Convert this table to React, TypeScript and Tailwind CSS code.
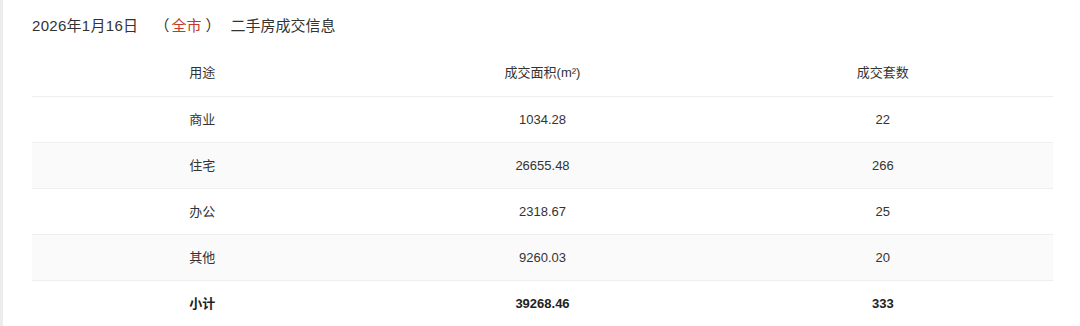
import React from 'react';

const rows = [
  { use: '商业', area: '1034.28', count: '22' },
  { use: '住宅', area: '26655.48', count: '266' },
  { use: '办公', area: '2318.67', count: '25' },
  { use: '其他', area: '9260.03', count: '20' },
];

export default function App() {
  return (
    <div
      className="flex h-[326px] w-[1080px] overflow-hidden bg-white text-[#333]"
      style={{ fontFamily: '"Liberation Sans", "Noto Sans CJK SC", sans-serif' }}
    >
      {/* left gutter */}
      <div className="w-[3px] shrink-0 bg-[#ececec]" />

      <div className="flex-1 pl-[29px] pt-4">
        {/* Heading */}
        <div className="flex h-5 items-center text-[15px] leading-5 text-[#333]">
          <span className="tracking-[0.3px]">2026年1月16日</span>
          <span className="ml-[16px]">（</span>
          <span className="ml-[2px] text-[#c0392b]">全市</span>
          <span className="ml-[4px]">）</span>
          <span className="ml-[10px]">二手房成交信息</span>
        </div>

        {/* Table */}
        <div className="mt-[14px] w-[1021px] text-[13px]">
          <div className="grid h-[47px] grid-cols-3 items-center border-b border-[#eeeeee] text-center">
            <div>用途</div>
            <div>成交面积(m²)</div>
            <div>成交套数</div>
          </div>

          {rows.map((r, i) => (
            <div
              key={r.use}
              className={`grid h-[46px] grid-cols-3 items-center border-b border-[#eeeeee] text-center ${
                i % 2 === 1 ? 'bg-[#fafafa]' : 'bg-white'
              }`}
            >
              <div>{r.use}</div>
              <div>{r.area}</div>
              <div>{r.count}</div>
            </div>
          ))}

          <div className="grid h-[46px] grid-cols-3 items-center text-center font-bold text-[#222]">
            <div>小计</div>
            <div>39268.46</div>
            <div>333</div>
          </div>
        </div>
      </div>
    </div>
  );
}
